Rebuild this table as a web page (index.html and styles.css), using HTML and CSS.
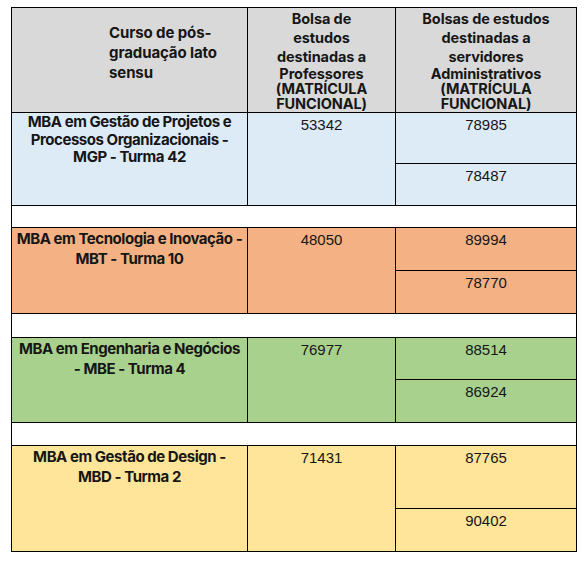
FILE: index.html
```html
<!DOCTYPE html>
<html lang="pt">
<head>
<meta charset="utf-8">
<title>Bolsas de estudos</title>
<link rel="stylesheet" href="styles.css">
</head>
<body>
<div class="sheet">
  <div class="cell head head-course">Curso de pós-<br>graduação lato<br>sensu</div>
  <div class="cell head head-col">
    <div class="head-top">Bolsa de<br>estudos<br>destinadas a</div>
    <div class="head-bottom">Professores<br>(MATRÍCULA<br>FUNCIONAL)</div>
  </div>
  <div class="cell head head-col">
    <div class="head-top">Bolsas de estudos<br>destinadas a<br>servidores</div>
    <div class="head-bottom">Administrativos<br>(MATRÍCULA<br>FUNCIONAL)</div>
  </div>

  <div class="cell course course-tight blue span2">MBA em Gestão de Projetos e<br>Processos Organizacionais -<br>MGP - Turma 42</div>
  <div class="cell num blue span2">53342</div>
  <div class="cell num blue">78985</div>
  <div class="cell num blue">78487</div>

  <div class="cell spacer"></div>

  <div class="cell course orange span2">MBA em Tecnologia e Inovação -<br>MBT - Turma 10</div>
  <div class="cell num orange span2">48050</div>
  <div class="cell num orange">89994</div>
  <div class="cell num orange">78770</div>

  <div class="cell spacer"></div>

  <div class="cell course green span2">MBA em Engenharia e Negócios<br>- MBE - Turma 4</div>
  <div class="cell num green span2">76977</div>
  <div class="cell num green">88514</div>
  <div class="cell num green">86924</div>

  <div class="cell spacer"></div>

  <div class="cell course yellow span2">MBA em Gestão de Design -<br>MBD - Turma 2</div>
  <div class="cell num yellow span2">71431</div>
  <div class="cell num yellow">87765</div>
  <div class="cell num yellow">90402</div>
</div>
</body>
</html>
```
FILE: styles.css
```css
html, body {
  margin: 0;
  padding: 0;
  background: #ffffff;
}

.sheet {
  display: grid;
  grid-template-columns: 235px 147px 180px;
  grid-template-rows: 104px 50px 41px 21px 42px 42px 23px 41px 42px 22px 62px 42px;
  gap: 1px;
  background: #000000;
  border: 1px solid #000000;
  width: max-content;
  margin: 7px 0 0 11px;
  color: #161616;
}

.cell {
  background: #ffffff;
  overflow: hidden;
}

.head {
  background: #d9d9d9;
  font-family: Inter, "Open Sans", sans-serif;
  font-weight: 700;
  font-size: 14.5px;
}

.head-course {
  padding: 15px 0 0 97px;
  font-size: 15px;
  font-weight: 700;
  line-height: 20px;
  letter-spacing: -0.1px;
}

.head-col {
  text-align: center;
  padding-top: 1px;
  letter-spacing: -0.1px;
}

.head-top {
  line-height: 19px;
}

.head-bottom {
  line-height: 15px;
}

.course {
  font-family: Inter, "Open Sans", sans-serif;
  font-weight: 700;
  font-size: 15px;
  letter-spacing: -0.45px;
  line-height: 20px;
  padding-top: 1px;
  text-align: center;
  white-space: nowrap;
}

.course-tight {
  line-height: 17.5px;
  padding-top: 0;
}

.num {
  font-family: "Liberation Sans", Arial, sans-serif;
  font-size: 15px;
  line-height: 17px;
  text-align: center;
  padding-top: 3px;
}

.span2 {
  grid-row: span 2;
}

.spacer {
  grid-column: 1 / -1;
}

.blue { background: #ddebf7; }
.orange { background: #f4b183; }
.green { background: #a9d18e; }
.yellow { background: #ffe599; }
```
